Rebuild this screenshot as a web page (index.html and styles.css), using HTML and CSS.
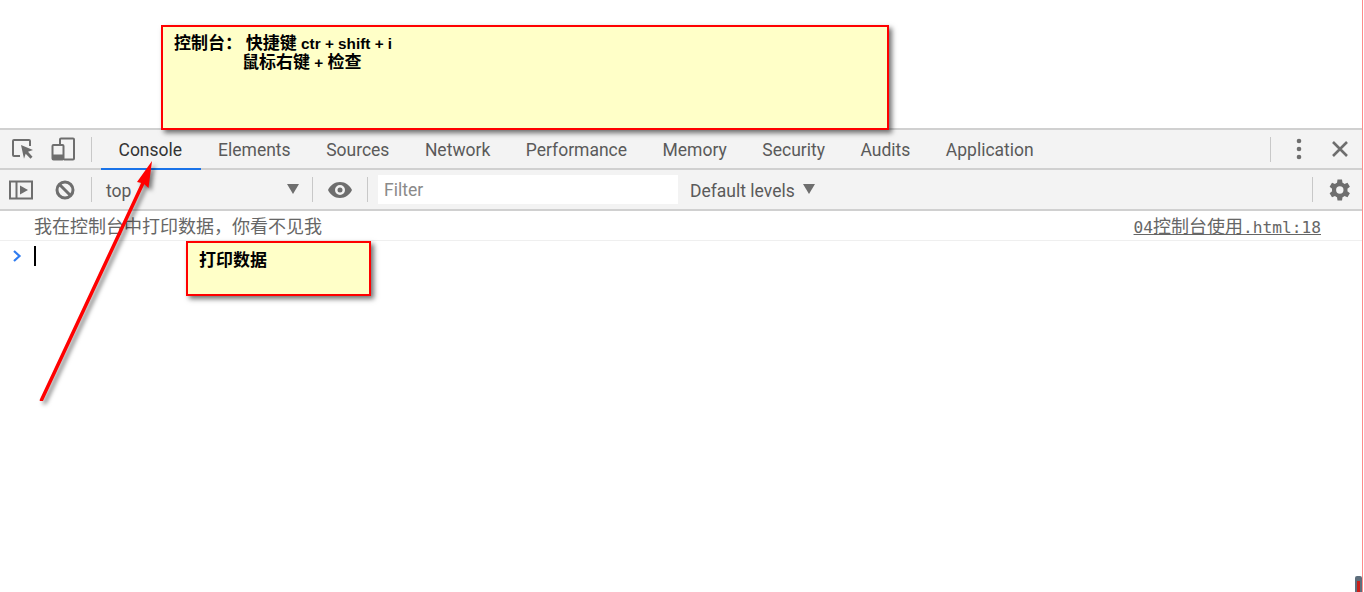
FILE: index.html
```html
<!DOCTYPE html>
<html lang="zh">
<head>
<meta charset="utf-8">
<title>控制台</title>
<link rel="stylesheet" href="styles.css">
</head>
<body>
<div class="page">
  <div class="blank"></div>
  <div class="bar tabsbar">
    <div class="iconbtn first">
      <svg width="24" height="24" viewBox="0 0 24 24"><path class="ln" d="M9 19H3a1 1 0 0 1-1-1V4a1 1 0 0 1 1-1h15a1 1 0 0 1 1 1v5" /><path class="fl" d="M10 8l12 5-5 1.7 4.500 5-2 2-4.800-5-1.700 5z"/></svg>
    </div>
    <div class="iconbtn device">
      <svg width="24" height="24" viewBox="0 0 24 24"><path class="ln" d="M9 8V2.500a1 1 0 0 1 1-1h12a1 1 0 0 1 1 1v19a1 1 0 0 1-1 1h-9"/><rect class="ln" x="1.500" y="8" width="11" height="14.500" rx="1"/><rect class="fl" x="1.500" y="17.500" width="11" height="5"/></svg>
    </div>
    <span class="sep tabsep"></span>
    <nav class="tabs">
      <span class="tab active">Console</span>
      <span class="tab">Elements</span>
      <span class="tab">Sources</span>
      <span class="tab">Network</span>
      <span class="tab">Performance</span>
      <span class="tab">Memory</span>
      <span class="tab">Security</span>
      <span class="tab">Audits</span>
      <span class="tab">Application</span>
    </nav>
    <span class="spacer"></span>
    <span class="sep"></span>
    <div class="iconbtn more">
      <svg width="6" height="22" viewBox="0 0 6 22"><circle class="fl" cx="3" cy="3" r="2.300"/><circle class="fl" cx="3" cy="11" r="2.300"/><circle class="fl" cx="3" cy="19" r="2.300"/></svg>
    </div>
    <div class="iconbtn close">
      <svg width="16" height="16" viewBox="0 0 16 16"><path class="x" d="M1 1l14 14M15 1L1 15"/></svg>
    </div>
  </div>
  <div class="bar filterbar">
    <div class="iconbtn sidebar">
      <svg width="24" height="20" viewBox="0 0 24 20"><rect class="ln" x="1" y="1.500" width="22" height="17"/><path class="ln" d="M7.500 1.500v17"/><path class="fl" d="M11 5.500l8 4.500-8 4.500z"/></svg>
    </div>
    <div class="iconbtn clear">
      <svg width="20" height="20" viewBox="0 0 20 20"><circle class="ring" cx="10" cy="10" r="8"/><path class="ring" d="M4.500 4.500l11 11"/></svg>
    </div>
    <span class="sep"></span>
    <div class="context"><span>top</span><i class="tri"></i></div>
    <span class="sep"></span>
    <div class="iconbtn eye">
      <svg width="24" height="16" viewBox="0 0 24 16"><path class="fl" fill-rule="evenodd" d="M12 0C6.500 0 2.300 3.500 0 8c2.300 4.500 6.500 8 12 8s9.700-3.500 12-8c-2.300-4.500-6.500-8-12-8zm0 13a5 5 0 1 1 0-10 5 5 0 0 1 0 10zm0-2.500a2.500 2.500 0 1 0 0-5 2.500 2.500 0 0 0 0 5z"/></svg>
    </div>
    <span class="sep"></span>
    <div class="filter">Filter</div>
    <div class="levels"><span>Default levels</span><i class="tri"></i></div>
    <span class="spacer"></span>
    <span class="sep"></span>
    <div class="iconbtn gear">
      <svg width="24" height="24" viewBox="0 0 24 24"><path class="fl" d="M19.400 13.200c.1-.4.100-.8.100-1.200s0-.8-.1-1.200l2.500-2-2.400-4.100-3 1.200c-.6-.5-1.300-.9-2-1.200L14 1.500H9.500l-.5 3.200c-.7.300-1.400.7-2 1.200l-3-1.200-2.400 4.100 2.500 2c-.1.400-.1.800-.1 1.200s0 .8.100 1.200l-2.500 2 2.400 4.100 3-1.200c.6.500 1.300.9 2 1.200l.5 3.200H14l.5-3.200c.7-.3 1.400-.7 2-1.200l3 1.200 2.400-4.100zM11.800 15.700a3.700 3.700 0 1 1 0-7.400 3.700 3.700 0 0 1 0 7.400z"/></svg>
    </div>
  </div>
  <div class="log">
    <span class="msg">我在控制台中打印数据，你看不见我</span>
    <a class="src">04<span class="cjk">控制台使用</span>.html:18</a>
  </div>
  <div class="prompt">
    <svg width="10" height="12" viewBox="0 0 10 12"><path class="chev" d="M2 1l5.500 5L2 11"/></svg>
    <span class="caret"></span>
  </div>
</div>

<div class="note note-main">
  <div class="line">控制台： 快捷键<span class="latin"> ctr + shift + i</span></div>
  <div class="line indent">鼠标右键<span class="latin"> + </span>检查</div>
</div>
<div class="note note-print"><div class="line">打印数据</div></div>

<svg class="arrow" width="200" height="300" viewBox="0 0 200 300">
  <path class="shaft" d="M41.500 299L143 82"/>
  <path class="head" d="M152 60L148.500 87 143.500 82.500 137 81z"/>
</svg>
<div class="scrollmark"><i></i></div>
</body>
</html>
```
FILE: styles.css
```css
* { box-sizing: border-box; }
html, body { margin: 0; height: 100%; background: #fff; overflow: hidden; }
body { font-family: Roboto, "Noto Sans CJK SC", sans-serif; color: #5a5a5a; }
.page { width: 1363px; height: 592px; border-right: 1px solid #ff8a8a; display: flex; flex-direction: column; }
.blank { height: 128px; flex: none; }
.bar { display: flex; align-items: center; background: #f3f3f3; flex: none; border-bottom: 2px solid #d0d0d0; }
.tabsbar { height: 42px; border-top: 2px solid #d0d0d0; }
.filterbar { height: 41px; }
.spacer { flex: 1; }
.sep { width: 1px; height: 25px; background: #c8c8c8; flex: none; }
.iconbtn { display: flex; align-items: center; justify-content: center; flex: none; }
.ln { fill: none; stroke: #6e6e6e; stroke-width: 2; }
.fl { fill: #6e6e6e; }
.x { stroke: #6e6e6e; stroke-width: 2.600; fill: none; }
.ring { stroke: #6e6e6e; stroke-width: 3; fill: none; }
.first { width: 24px; margin-left: 11px; }
.device { width: 24px; margin-left: 16px; }
.tabsep { margin-left: 16px; margin-right: 9px; }
.tabs { display: flex; height: 100%; }
.tab { display: flex; align-items: center; padding: 2px 18px 0 17.500px; font-size: 17.500px; white-space: nowrap; border-bottom: 2px solid transparent; margin-bottom: -2px; color: #5a5a5a; }
.tab.active { color: #333; border-bottom-color: #1a73e8; padding-right: 18.500px; }
.more { margin-left: 25px; width: 6px; }
.close { margin-left: 30px; margin-right: 14px; width: 16px; }
.sidebar { width: 24px; margin-left: 9px; }
.clear { width: 20px; margin-left: 22px; margin-right: 16px; }
.context { width: 220px; display: flex; align-items: center; justify-content: space-between; padding: 2px 13px 0 14px; font-size: 17.500px; }
.context .tri { margin-top: -3px; }
.tri { width: 0; height: 0; border-left: 6px solid transparent; border-right: 6px solid transparent; border-top: 10px solid #6e6e6e; display: block; }
.eye { width: 24px; margin-left: 15px; margin-right: 15px; }
.filter { width: 300px; height: 29px; margin-left: 10px; background: #fff; color: #8a8a8a; font-size: 17.500px; padding-left: 6px; line-height: 31px; }
.levels { display: flex; align-items: center; gap: 8px; margin-left: 12px; padding-top: 2px; font-size: 17.500px; }
.levels .tri { margin-top: -4px; }
.gear { width: 24px; margin-left: 15px; margin-right: 10px; }
.log { height: 30px; flex: none; display: flex; align-items: center; justify-content: space-between; padding: 0 41px 2px 34px; border-bottom: 1px solid #efefef; }
.msg { font-family: "Noto Sans CJK SC", sans-serif; font-size: 18px; color: #666; }
.src { font-family: "DejaVu Sans Mono", monospace; font-size: 16.200px; color: #666; text-decoration: underline; }
.cjk { font-family: "Noto Sans CJK SC", sans-serif; font-size: 18px; }
.prompt { display: flex; align-items: center; gap: 12px; padding: 5px 0 0 12px; }
.chev { fill: none; stroke: #2f7cf0; stroke-width: 2.200; }
.caret { width: 2px; height: 20px; background: #000; }
.note { position: absolute; background: #ffffc8; border: 2px solid #f00; box-shadow: 3px 3px 5px rgba(0,0,0,.55); color: #000; font: bold 17px/19px "Noto Sans CJK SC", sans-serif; padding: 5px 11px; }
.line { height: 19px; white-space: nowrap; }
.latin { font-family: "Liberation Sans", sans-serif; font-size: 15.300px; line-height: 1; }
.note-main { left: 161px; top: 25px; width: 728px; height: 105px; }
.indent { padding-left: 68px; }
.note-print { left: 186px; top: 241px; width: 185px; height: 55px; padding-top: 6px; }
.arrow { position: absolute; left: 0; top: 101px; filter: drop-shadow(3px 3px 2px rgba(0,0,0,.5)); }
.shaft { stroke: #f00; stroke-width: 3.500; stroke-linecap: round; fill: none; }
.head { fill: #f00; }
.scrollmark { position: absolute; left: 1355px; top: 576px; width: 7px; height: 16px; background: #5e6e7c; border-radius: 2px 2px 0 0; padding: 5px 2px 0; }
.scrollmark i { display: block; height: 11px; background: #c8201a; }
```
